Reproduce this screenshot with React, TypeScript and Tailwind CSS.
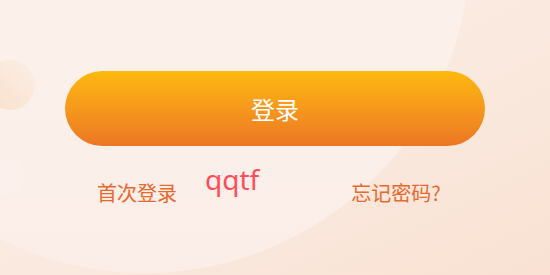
import React from 'react';

const App: React.FC = () => {
  return (
    <div className="relative w-[550px] h-[275px] overflow-hidden bg-gradient-to-br from-[#fbf1ec] to-[#f9e2d3] font-['Noto_Sans','Noto_Sans_CJK_SC',sans-serif]">
      {/* background decorations */}
      <div className="absolute left-[-180px] top-[-377px] w-[650px] h-[650px] rounded-full bg-gradient-to-b from-[#fcf3ef] to-[#fbeee8]" />
      <div className="absolute left-[-15px] top-[60px] w-[50px] h-[50px] rounded-full bg-gradient-to-bl from-[#fbefe7] to-[#fadfc9]" />
      <div className="absolute left-[-12px] top-[158px] w-[36px] h-[36px] rounded-full bg-[#fcf0ec]" />

      <div className="relative flex flex-col pt-[71px]">
        <button className="ml-[65px] w-[420px] h-[75px] rounded-full bg-gradient-to-b from-[#fdb90b] to-[#ec7623] text-white text-[24px] leading-[24px] font-['Noto_Sans_CJK_SC',sans-serif]">
          登录
        </button>

        <div className="flex items-start mt-[19px] pl-[97px]">
          <span className="mt-[18px] text-[20px] leading-[20px] text-[#e8692c] font-['Noto_Sans_CJK_SC',sans-serif]">首次登录</span>
          <span className="ml-[28px] text-[28px] leading-[28px] text-[#ff4d5a] font-['Noto_Sans',sans-serif]">qqtf</span>
          <span className="ml-[92px] mt-[18px] text-[20px] leading-[20px] text-[#e8692c] font-['Noto_Sans_CJK_SC',sans-serif]">忘记密码?</span>
        </div>
      </div>
    </div>
  );
};

export default App;
